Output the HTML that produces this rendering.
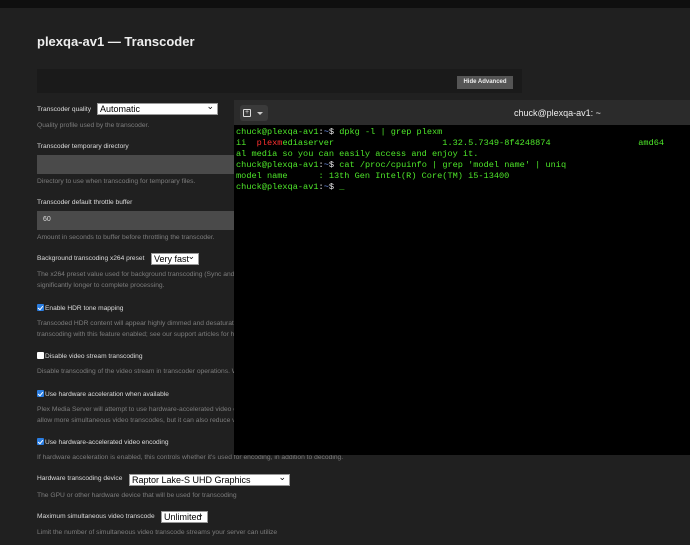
<!DOCTYPE html>
<html><head><meta charset="utf-8"><style>
*{margin:0;padding:0;box-sizing:border-box}
body{width:690px;height:545px;overflow:hidden;background:#202020;font-family:"Liberation Sans","DejaVu Sans",sans-serif;position:relative}
.a{position:absolute;white-space:nowrap}
.lab{font-size:6.6px;color:#ddd}
.desc{font-size:6.7px;color:#7d7d7d}
.sel{position:absolute;background:#fff;border:1px solid #999;color:#000;font-size:9px;line-height:10px;padding-left:2px}
.sel:after{content:"⌄";position:absolute;right:3px;top:-3px;font-size:9px}
.inp{position:absolute;left:37px;width:200px;height:19px;background:#4a4a4a}
.cb{display:inline-block;width:7px;height:7px;background:#2a7de1;border-radius:1px;vertical-align:-1px;margin-right:1px;position:relative}
.cb:not(.off):after{content:"";position:absolute;left:2px;top:0.5px;width:2px;height:4px;border:solid #fff;border-width:0 1px 1px 0;transform:rotate(40deg)}
.cb.off{background:#fff}
.term{position:absolute;left:234px;top:100px;width:456px;height:355px;background:#000}
.tb{height:25px;background:#2b2b2b;position:relative}
pre{font-family:"Liberation Mono","DejaVu Sans Mono",monospace;font-size:8.6px;line-height:11px;color:#4ee62a;padding:2px 0 0 2px}
.w{color:#eee}.r{color:#ff3030}.b{color:#7aa0ff}
</style></head><body>
<div class="a" style="left:0;top:0;width:690px;height:8px;background:#0f0f0f"></div>
<div class="a" style="left:37px;top:34px;font-size:13px;font-weight:bold;color:#eee">plexqa-av1 — Transcoder</div>
<div class="a" style="left:37px;top:69px;width:485px;height:24px;background:#1a1a1a"></div>
<div class="a" style="left:457px;top:76px;width:56px;height:13px;background:#555;color:#eee;font-size:6px;font-weight:bold;text-align:center;line-height:13px">Hide Advanced</div>

<div class="a lab" style="left:37px;top:106px">Transcoder quality</div>
<div class="sel" style="left:97px;top:103px;width:121px;height:12px">Automatic</div>
<div class="a desc" style="left:37px;top:122px">Quality profile used by the transcoder.</div>
<div class="a lab" style="left:37px;top:143px">Transcoder temporary directory</div>
<div class="inp" style="top:155px"></div>
<div class="a desc" style="left:37px;top:178px">Directory to use when transcoding for temporary files.</div>
<div class="a lab" style="left:37px;top:199px">Transcoder default throttle buffer</div>
<div class="inp" style="top:211px"><span style="position:absolute;left:6px;top:5px;font-size:7px;color:#ddd">60</span></div>
<div class="a desc" style="left:37px;top:234px">Amount in seconds to buffer before throttling the transcoder.</div>
<div class="a lab" style="left:37px;top:255px">Background transcoding x264 preset</div>
<div class="sel" style="left:151px;top:253px;width:48px;height:12px">Very fast</div>
<div class="a desc" style="left:37px;top:271px">The x264 preset value used for background transcoding (Sync and M</div>
<div class="a desc" style="left:37px;top:282px">significantly longer to complete processing.</div>
<div class="a lab" style="left:37px;top:304px"><span class="cb"></span>Enable HDR tone mapping</div>
<div class="a desc" style="left:37px;top:320px">Transcoded HDR content will appear highly dimmed and desaturate</div>
<div class="a desc" style="left:37px;top:331px">transcoding with this feature enabled; see our support articles for h</div>
<div class="a lab" style="left:37px;top:352px"><span class="cb off"></span>Disable video stream transcoding</div>
<div class="a desc" style="left:37px;top:368px">Disable transcoding of the video stream in transcoder operations. W</div>
<div class="a lab" style="left:37px;top:390px"><span class="cb"></span>Use hardware acceleration when available</div>
<div class="a desc" style="left:37px;top:406px">Plex Media Server will attempt to use hardware-accelerated video c</div>
<div class="a desc" style="left:37px;top:417px">allow more simultaneous video transcodes, but it can also reduce vi</div>
<div class="a lab" style="left:37px;top:438px"><span class="cb"></span>Use hardware-accelerated video encoding</div>
<div class="a desc" style="left:37px;top:454px">If hardware acceleration is enabled, this controls whether it's used for encoding, in addition to decoding.</div>
<div class="a lab" style="left:37px;top:475px">Hardware transcoding device</div>
<div class="sel" style="left:129px;top:474px;width:161px;height:12px">Raptor Lake-S UHD Graphics</div>
<div class="a desc" style="left:37px;top:492px">The GPU or other hardware device that will be used for transcoding</div>
<div class="a lab" style="left:37px;top:513px">Maximum simultaneous video transcode</div>
<div class="sel" style="left:161px;top:511px;width:47px;height:12px">Unlimited</div>
<div class="a desc" style="left:37px;top:529px">Limit the number of simultaneous video transcode streams your server can utilize</div>

<div class="term">
<div class="tb">
<div class="a" style="left:6px;top:5px;width:28px;height:16px;background:#3a3a3a;border-radius:3px"></div>
<div class="a" style="left:9px;top:9px;width:8px;height:8px;border:1.2px solid #ddd;border-radius:1px;font-size:7px;color:#ddd;line-height:5px;text-align:center">+</div>
<div class="a" style="left:23px;top:12px;width:0;height:0;border-left:3px solid transparent;border-right:3px solid transparent;border-top:3px solid #ccc"></div>
<div class="a" style="left:280px;top:8px;font-size:9px;color:#eee">chuck@plexqa-av1: ~</div>
</div>
<pre>chuck@plexqa-av1<span class="w">:</span><span class="b">~</span><span class="w">$</span> dpkg -l | grep plexm
ii  <span class="r">plexm</span>ediaserver                     1.32.5.7349-8f4248874                 amd64
al media so you can easily access and enjoy it.
chuck@plexqa-av1<span class="w">:</span><span class="b">~</span><span class="w">$</span> cat /proc/cpuinfo | grep 'model name' | uniq
model name      : 13th Gen Intel(R) Core(TM) i5-13400
chuck@plexqa-av1<span class="w">:</span><span class="b">~</span><span class="w">$</span> _</pre>
</div>
</body></html>
